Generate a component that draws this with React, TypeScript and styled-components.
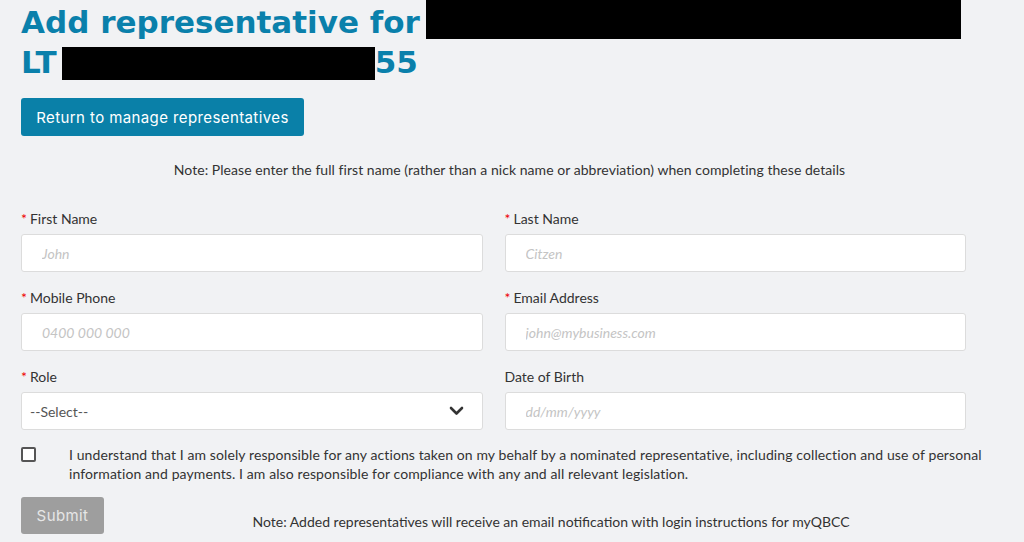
import React from 'react';
import styled, { createGlobalStyle } from 'styled-components';

const GlobalStyle = createGlobalStyle`
  html, body {
    margin: 0;
    padding: 0;
    background: #f1f2f4;
    font-family: Lato, 'Noto Sans', sans-serif;
    color: #333;
  }
`;

const Page = styled.div`
  padding: 0 26px 0 21px;
  width: 1024px;
  box-sizing: border-box;
`;

const Heading = styled.h1`
  margin: 0;
  font-family: 'DejaVu Sans', Inter, sans-serif;
  font-size: 31px;
  font-weight: 700;
  line-height: 40px;
  color: #0a80ab;
`;

const Redacted = styled.span<{ $w: number; $h: number; $top?: number; $left?: number }>`
  display: inline-block;
  width: ${(p) => p.$w}px;
  height: ${(p) => p.$h}px;
  margin-top: ${(p) => p.$top ?? 0}px;
  margin-left: ${(p) => p.$left ?? 0}px;
  background: #000;
  flex-shrink: 0;
`;

const HeadLine = styled.div`
  display: flex;
  align-items: flex-start;
  height: 40px;
  padding-top: 2px;
  white-space: nowrap;
  & + & {
    padding-top: 0;
  }
`;

const Button = styled.button<{ $disabled?: boolean }>`
  font-family: Inter, 'Open Sans', sans-serif;
  font-size: 15px;
  font-weight: 400;
  letter-spacing: 0.4px;
  border: none;
  border-radius: 3px;
  color: ${(p) => (p.$disabled ? '#e6e6e6' : '#fff')};
  background: ${(p) => (p.$disabled ? '#9e9e9e' : '#0a80a8')};
  height: 38px;
  padding: 0 14px;
  cursor: pointer;
`;

const TopButton = styled(Button)`
  margin-top: 16px;
  width: 283px;
`;

const SubmitButton = styled(Button)`
  width: 83px;
  height: 37px;
  padding: 0;
`;

const Note = styled.p`
  margin: 24px 0 0;
  text-align: center;
  font-size: 14px;
  line-height: 20px;
  letter-spacing: 0.05px;
`;

const FormGrid = styled.div`
  margin-top: 29px;
  width: 945px;
  display: grid;
  grid-template-columns: 1fr 1fr;
  column-gap: 22px;
  row-gap: 16px;
`;

const Field = styled.div`
  display: flex;
  flex-direction: column;
  gap: 5px;
`;

const Label = styled.label`
  font-size: 14px;
  line-height: 20px;
  color: #333;
`;

const Star = styled.span`
  color: #e00;
  margin-right: 3px;
`;

const Input = styled.input`
  height: 38px;
  box-sizing: border-box;
  border: 1px solid #dcdcdc;
  border-radius: 3px;
  background: #fff;
  padding: 0 20px;
  font-family: Lato, 'Noto Sans', sans-serif;
  font-size: 14px;
  &::placeholder {
    color: #c4c4c4;
    font-style: italic;
  }
`;

const SelectBox = styled.div`
  height: 38px;
  box-sizing: border-box;
  border: 1px solid #dcdcdc;
  border-radius: 3px;
  background: #fff;
  padding: 0 18px 0 8px;
  display: flex;
  align-items: center;
  justify-content: space-between;
  font-size: 14px;
  color: #555;
`;

const ConsentRow = styled.div`
  margin-top: 15px;
  display: flex;
  align-items: flex-start;
  gap: 33px;
`;

const CheckBox = styled.span`
  margin-top: 2px;
  width: 15px;
  height: 15px;
  box-sizing: border-box;
  border: 2px solid #555;
  border-radius: 2px;
  background: #fff;
  flex-shrink: 0;
`;

const ConsentText = styled.p`
  margin: 0;
  font-size: 14px;
  line-height: 19px;
  letter-spacing: 0.1px;
  color: #333;
`;

const BottomRow = styled.div`
  margin-top: 14px;
  width: 977px;
  display: flex;
  align-items: flex-end;
`;

const BottomNote = styled.p`
  flex: 1;
  margin: 0 0 2px;
  text-align: center;
  font-size: 14px;
  line-height: 20px;
`;

const Chevron = () => (
  <svg width="15" height="10" viewBox="0 0 15 10">
    <path d="M2 2 L7.5 7.5 L13 2" fill="none" stroke="#333" strokeWidth="2.6" strokeLinecap="round" strokeLinejoin="round" />
  </svg>
);

export default function App() {
  return (
    <Page>
      <GlobalStyle />
      <Heading>
        <HeadLine>
          Add representative for
          <Redacted $w={535} $h={39} $top={-2} $left={6} />
        </HeadLine>
        <HeadLine>
          LT
          <Redacted $w={313} $h={33} $top={5} $left={5} />
          55
        </HeadLine>
      </Heading>
      <TopButton>Return to manage representatives</TopButton>
      <Note>Note: Please enter the full first name (rather than a nick name or abbreviation) when completing these details</Note>
      <FormGrid>
        <Field>
          <Label><Star>*</Star>First Name</Label>
          <Input placeholder="John" />
        </Field>
        <Field>
          <Label><Star>*</Star>Last Name</Label>
          <Input placeholder="Citzen" />
        </Field>
        <Field>
          <Label><Star>*</Star>Mobile Phone</Label>
          <Input placeholder="0400 000 000" />
        </Field>
        <Field>
          <Label><Star>*</Star>Email Address</Label>
          <Input placeholder="john@mybusiness.com" />
        </Field>
        <Field>
          <Label><Star>*</Star>Role</Label>
          <SelectBox>
            --Select--
            <Chevron />
          </SelectBox>
        </Field>
        <Field>
          <Label>Date of Birth</Label>
          <Input placeholder="dd/mm/yyyy" />
        </Field>
      </FormGrid>
      <ConsentRow>
        <CheckBox />
        <ConsentText>
          I understand that I am solely responsible for any actions taken on my behalf by a nominated representative, including collection and use of personal information and payments. I am also responsible for compliance with any and all relevant legislation.
        </ConsentText>
      </ConsentRow>
      <BottomRow>
        <SubmitButton $disabled>Submit</SubmitButton>
        <BottomNote>Note: Added representatives will receive an email notification with login instructions for myQBCC</BottomNote>
      </BottomRow>
    </Page>
  );
}
